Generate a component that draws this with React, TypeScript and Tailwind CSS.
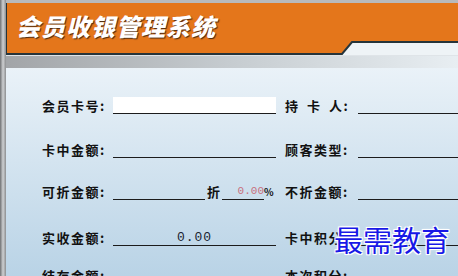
import React from "react";

const label = "text-[13px] font-bold leading-[16px] tracking-[1.5px] text-[#111] whitespace-nowrap";
const line = "h-[17px] border-b border-[#1c1c1c]";

function Row({
	left,
	right,
	field,
	className = "",
}: {
	left: React.ReactNode;
	right: React.ReactNode;
	field?: React.ReactNode;
	className?: string;
}) {
	return (
		<div className={`grid grid-cols-[71px_163px_9px_73px_1fr] h-[20px] shrink-0 items-end ${className}`}>
			<div className={label}>{left}</div>
			{field ?? <div className={line}></div>}
			<div></div>
			<div className={label}>{right}</div>
			<div className={line}></div>
		</div>
	);
}

export default function App() {
	return (
		<div className="w-[458px] h-[276px] overflow-hidden relative flex bg-[#d0dce6] font-['Noto_Sans_CJK_SC','Noto_Sans',sans-serif]">
			{/* window frame */}
			<div className="w-[6px] h-full shrink-0 bg-linear-to-r from-[#6f7173] via-[#cfd1d3] to-[#8c8e90]"></div>

			<div className="flex-1 flex flex-col min-h-0">
				<div className="h-[3px] shrink-0 bg-[#b8babc]"></div>

				{/* title bar */}
				<div className="flex h-[52px] shrink-0">
					<div className="w-[330px] bg-[#e4761b] border-b-2 border-l border-[#26343a] pl-[9px] flex items-center">
						<span className="text-[24px] font-black italic tracking-[1px] text-white leading-none [text-shadow:1px_1px_1px_#4a2a10] -mt-[4px]">
							会员收银管理系统
						</span>
					</div>
					<svg className="flex-1 h-full" viewBox="0 0 122 52" preserveAspectRatio="none">
						<polygon points="0,0 122,0 122,38 16,38 6,50 0,50" fill="#e4761b" />
						<polygon points="0,52 6,52 16,40 122,40 122,52" fill="#eef3f6" />
						<polyline points="0,51 6,51 16,39 122,39" fill="none" stroke="#26343a" strokeWidth="2" />
					</svg>
				</div>

				<div className="h-[13px] shrink-0 border-t border-[#dfe4e8] bg-linear-to-r from-[#a2a5a8] via-[#c6ccd0] to-[#e8eef2]"></div>

				{/* form */}
				<div className="flex-1 min-h-0 bg-linear-to-b from-[#eaf2f8] to-[#b9d3e6] pl-[36px] flex flex-col">
					<Row
						className="mt-[26px]"
						left="会员卡号:"
						right={
							<>
								<span className="tracking-[9px]">持卡</span>人:
							</>
						}
						field={<div className={`${line} bg-white`}></div>}
					/>
					<Row className="mt-[24px]" left="卡中金额:" right="顾客类型:" />
					<Row
						className="mt-[22px]"
						left="可折金额:"
						right="不折金额:"
						field={
							<div className="flex items-end">
								<div className={`${line} w-[92px]`}></div>
								<span className={`${label} px-[2px] tracking-normal`}>折</span>
								<div className={`${line} w-[42px] text-right font-['Liberation_Mono',monospace] text-[11px] leading-[17px] text-[#c8707e]`}>
									0.00
								</div>
								<span className="text-[10px] font-bold leading-[16px] text-[#111]">%</span>
							</div>
						}
					/>
					<Row
						className="mt-[26px]"
						left="实收金额:"
						right="卡中积分:"
						field={
							<div className={`${line} text-center font-['Liberation_Mono',monospace] text-[13px] leading-[17px] tracking-[1px] text-[#1a2430]`}>
								0.00
							</div>
						}
					/>
					<Row className="mt-[18px]" left="结存金额:" right="本次积分:" />
				</div>
			</div>

			{/* watermark */}
			<div className="absolute left-[334px] top-[225px] text-[29px] leading-none text-[#1818e6] [text-shadow:1px_1px_0_#fff,-1px_-1px_0_#fff,1px_-1px_0_#fff,-1px_1px_0_#fff,0_0_3px_#fff]">
				最需教育
			</div>
		</div>
	);
}
